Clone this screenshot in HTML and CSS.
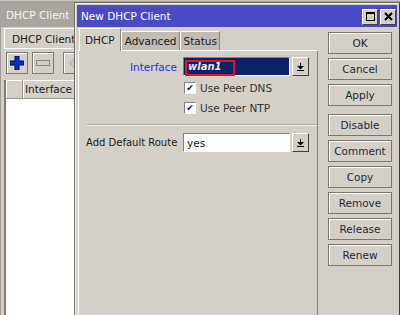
FILE: index.html
```html
<!DOCTYPE html>
<html lang="en">
<head>
  <meta charset="UTF-8">
  <title>DHCP Client</title>
  <link rel="stylesheet" href="styles.css">
</head>
<body>
  <div class="bgwin">
    <div class="bg-title">DHCP Client</div>
    <div class="bg-body">
      <div class="bg-tabs"><span class="bg-tab">DHCP Client</span></div>
      <div class="bg-tools">
        <span class="tb">
          <svg width="14" height="14" viewBox="0 0 14 14"><path d="M5 0h4v5h5v4H9v5H5V9H0V5h5z" fill="#0a2ad8" stroke="#000a40" stroke-width="1"/></svg>
        </span>
        <span class="tb">
          <svg width="14" height="6" viewBox="0 0 14 6"><rect x="0.5" y="0.5" width="13" height="5" fill="#d4d0c8" stroke="#8a8782"/></svg>
        </span>
        <span class="tb tb-far">
          <svg width="10" height="10" viewBox="0 0 10 10"><path d="M5 1L1 5l4 4M9 1L5 5l4 4" fill="none" stroke="#b8b4ac" stroke-width="1.5"/></svg>
        </span>
      </div>
      <div class="bg-table">
        <div class="bg-head"><span class="c0"></span><span class="c1">Interface</span></div>
        <div class="bg-list"></div>
      </div>
    </div>
  </div>

  <div class="dlg">
    <div class="dlg-title">
      <span>New DHCP Client</span>
      <span class="wbtns">
        <span class="wbtn"><svg width="9" height="9" viewBox="0 0 9 9"><rect x="0.5" y="0.5" width="8" height="8" fill="none" stroke="#000"/><rect x="0" y="0" width="9" height="2" fill="#000"/></svg></span>
        <span class="wbtn"><svg width="9" height="9" viewBox="0 0 9 9"><path d="M1 1l7 7M8 1L1 8" stroke="#000" stroke-width="2"/></svg></span>
      </span>
    </div>
    <div class="dlg-body">
      <div class="dlg-main">
        <div class="tabs">
          <span class="tab active">DHCP</span>
          <span class="tab">Advanced</span>
          <span class="tab">Status</span>
        </div>
        <div class="panel">
          <div class="row">
            <span class="label changed">Interface</span>
            <span class="field dark"><span class="val">wlan1</span><span class="mark"></span></span>
            <span class="drop"><svg width="7" height="8" viewBox="0 0 7 8"><rect x="3" y="0" width="1" height="3"/><path d="M0 3h7L3.5 6.5z"/><rect x="0" y="7" width="7" height="1"/></svg></span>
          </div>
          <label class="check"><span class="box">&#10004;</span>Use Peer DNS</label>
          <label class="check"><span class="box">&#10004;</span>Use Peer NTP</label>
          <div class="sep"></div>
          <div class="row">
            <span class="label">Add Default Route</span>
            <span class="field"><span class="val">yes</span></span>
            <span class="drop"><svg width="7" height="8" viewBox="0 0 7 8"><rect x="3" y="0" width="1" height="3"/><path d="M0 3h7L3.5 6.5z"/><rect x="0" y="7" width="7" height="1"/></svg></span>
          </div>
        </div>
      </div>
      <div class="side">
        <span class="btn">OK</span>
        <span class="btn">Cancel</span>
        <span class="btn">Apply</span>
        <span class="btn gap">Disable</span>
        <span class="btn">Comment</span>
        <span class="btn">Copy</span>
        <span class="btn">Remove</span>
        <span class="btn">Release</span>
        <span class="btn">Renew</span>
      </div>
    </div>
  </div>
</body>
</html>
```

FILE: styles.css
```css
body {
  margin: 0;
  width: 400px;
  height: 315px;
  overflow: hidden;
  background-color: #d4d0c8;
  font-family: "DejaVu Sans", Verdana, sans-serif;
  font-size: 10px;
  color: #202020;
  position: relative;
}

/* window behind */
.bgwin {
  height: 315px;
  display: flex;
  flex-direction: column;
}

.bg-title {
  height: 27px;
  flex: none;
  background-color: #a9a59e;
  color: #f6f6f6;
  font-size: 10.5px;
  line-height: 28px;
  padding-left: 6px;
  border-top: 1px solid #c8c5bf;
  box-sizing: border-box;
}

.bg-body {
  flex: 1;
  display: flex;
  flex-direction: column;
  padding-left: 3px;
  border-left: 1px solid #a09c95;
}

.bg-tabs {
  height: 21px;
  border-bottom: 1px solid #fff;
  display: flex;
  align-items: flex-end;
}

.bg-tab {
  height: 20px;
  line-height: 20px;
  padding: 0 8px 0 7px;
  border-left: 1px solid #fff;
  border-top: 1px solid #fff;
  box-sizing: border-box;
  font-size: 10.5px;
}

.bg-tools {
  display: flex;
  gap: 4px;
  padding: 3px 0 0 2px;
  height: 25px;
}

.tb {
  width: 22px;
  height: 22px;
  box-sizing: border-box;
  border: 1px solid #7d7a75;
  box-shadow: inset 1px 1px #fff;
  display: flex;
  align-items: center;
  justify-content: center;
}

.tb-far {
  margin-left: 5px;
}

.bg-table {
  flex: 1;
  display: flex;
  flex-direction: column;
  margin-top: 3px;
  border-left: 2px solid #7f7c77;
}

.bg-head {
  height: 18px;
  display: flex;
  border-bottom: 1px solid #9a968f;
}

.bg-head span {
  border-right: 1px solid #9a968f;
  box-shadow: inset 1px 1px #fff;
  line-height: 19px;
  font-size: 10.5px;
}

.bg-head .c0 {
  width: 16px;
}

.bg-head .c1 {
  flex: 1;
  padding-left: 2px;
}

.bg-list {
  flex: 1;
  background-color: #fff;
}

/* dialog */
.dlg {
  position: absolute;
  left: 74px;
  top: 2px;
  width: 326px;
  height: 320px;
  box-sizing: border-box;
  border: 1px solid #6e6b66;
  border-right-color: #3a3a3a;
  padding: 2px 2px 0 2px;
  background-color: #d4d0c8;
  display: flex;
  flex-direction: column;
  box-shadow: inset 1px 1px #f2f0ec;
}

.dlg-title {
  height: 22px;
  flex: none;
  background-color: #4a4ac6;
  color: #fff;
  font-size: 10.5px;
  display: flex;
  align-items: center;
  justify-content: space-between;
  padding-left: 4px;
  padding-right: 1px;
}

.wbtns {
  display: flex;
  gap: 2px;
  margin-top: 1px;
}

.wbtn {
  width: 16px;
  height: 16px;
  box-sizing: border-box;
  background-color: #d4d0c8;
  border: 1px solid #404040;
  border-top-color: #fff;
  border-left-color: #fff;
  display: flex;
  align-items: center;
  justify-content: center;
}

.dlg-body {
  flex: 1;
  display: flex;
  gap: 10px;
}

.dlg-main {
  width: 240px;
  margin-left: 1px;
  display: flex;
  flex-direction: column;
}

.tabs {
  display: flex;
  align-items: flex-end;
  height: 22px;
  margin-top: 1px;
  padding-left: 1px;
}

.tab {
  height: 19px;
  line-height: 18px;
  padding: 0 2px 0 3px;
  box-sizing: border-box;
  background-color: #c0bcb4;
  border-top: 1px solid #fff;
  border-left: 1px solid #fff;
  border-right: 1px solid #8a8680;
  font-size: 10.5px;
}

.tab.active {
  height: 23px;
  line-height: 22px;
  margin-bottom: -1px;
  background-color: #d4d0c8;
  padding: 0 5px;
  position: relative;
}

.panel {
  flex: 1;
  border-top: 1px solid #fff;
  border-left: 1px solid #fff;
  border-right: 1px solid #8a8680;
  padding-top: 6px;
  padding-left: 7px;
}

.row {
  display: flex;
  align-items: center;
  height: 19px;
}

.label {
  width: 97px;
  flex: none;
  padding-right: 6px;
  box-sizing: border-box;
  text-align: right;
  white-space: nowrap;
  overflow: hidden;
  font-size: 10.5px;
}

.row:last-child .label {
  text-align: left;
  padding-right: 0;
  width: 94px;
  margin-right: 3px;
  font-size: 10px;
}

.label.changed {
  color: #2a2ee0;
}

.field {
  width: 107px;
  height: 19px;
  box-sizing: border-box;
  background-color: #fff;
  border: 1px solid #fff;
  border-top-color: #808080;
  border-left-color: #808080;
  display: flex;
  align-items: center;
  padding-left: 3px;
  position: relative;
  font-size: 10.5px;
}

.field.dark {
  background-color: #0c2268;
  color: #e4e8f8;
  padding-left: 4px;
}

.field.dark .val {
  font-style: italic;
  font-weight: bold;
  font-size: 10px;
}

.mark {
  position: absolute;
  left: 1px;
  top: 2px;
  width: 50px;
  height: 16px;
  box-sizing: border-box;
  border: 2px solid #e4141c;
}

.drop {
  width: 17px;
  height: 19px;
  margin-left: 2px;
  box-sizing: border-box;
  border: 1px solid #404040;
  border-top-color: #fff;
  border-left-color: #fff;
  display: flex;
  align-items: center;
  justify-content: center;
}

.check {
  display: flex;
  align-items: center;
  height: 20px;
  margin-left: 98px;
  gap: 4px;
  color: #333;
  font-size: 10.5px;
}

.check:first-of-type {
  margin-top: 2px;
}

.box {
  width: 12px;
  height: 12px;
  box-sizing: border-box;
  background-color: #fff;
  border: 1px solid #fff;
  border-top-color: #808080;
  border-left-color: #808080;
  font-size: 9px;
  line-height: 10px;
  text-align: center;
  color: #111;
}

.sep {
  margin: 6px 0 7px 1px;
  border-top: 1px solid #aeaaa2;
  border-bottom: 1px solid #f4f2ee;
}

.side {
  display: flex;
  flex-direction: column;
  gap: 4px;
  padding-top: 5px;
}

.btn {
  width: 64px;
  height: 22px;
  box-sizing: border-box;
  border: 1px solid #7a7772;
  box-shadow: inset 1px 1px #fff;
  display: flex;
  align-items: center;
  justify-content: center;
  color: #27283a;
  font-size: 10.5px;
}

.btn.gap {
  margin-top: 4px;
}
```
